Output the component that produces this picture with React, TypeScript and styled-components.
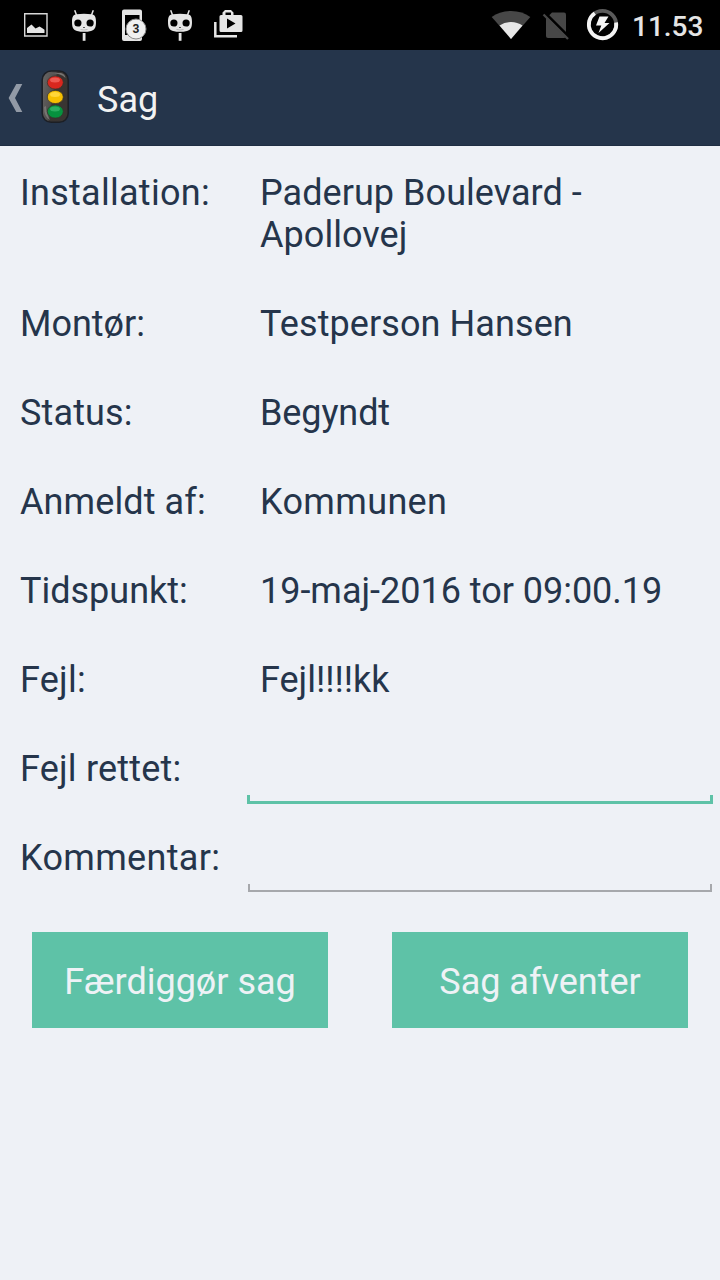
import React from "react";
import styled, { createGlobalStyle } from "styled-components";

const colors = {
  navy: "#25354b",
  page: "#eef1f6",
  green: "#5ec2a7",
  grey: "#a6a8ac",
  icon: "#e5e5e5",
  dim: "#474747",
};

const GlobalStyle = createGlobalStyle`
  body { margin: 0; background: ${colors.page}; }
  * { box-sizing: border-box; }
`;

const Screen = styled.div`
  width: 720px;
  height: 1280px;
  overflow: hidden;
  display: flex;
  flex-direction: column;
  background: ${colors.page};
  color: ${colors.navy};
  font-family: Roboto, "Liberation Sans", sans-serif;
  font-size: 36px;
  line-height: 42px;
`;

const StatusBar = styled.header`
  height: 50px;
  flex: none;
  display: flex;
  justify-content: space-between;
  background: #000;
`;

const StatusGroup = styled.div`
  display: flex;
  align-items: center;
`;

const Clock = styled.span`
  width: 88px;
  height: 50px;
  padding-top: 2px;
  line-height: 50px;
  font-size: 28px;
  font-weight: 500;
  color: ${colors.icon};
  white-space: nowrap;
`;

const StatusIcon = styled.svg`
  display: block;
  height: 50px;
`;

const ActionBar = styled.nav`
  height: 96px;
  flex: none;
  display: flex;
  align-items: center;
  background: ${colors.navy};
  border-bottom: 1px solid #1f2e43;
`;

const Title = styled.h1`
  margin: 5px 0 0;
  padding-left: 1px;
  font: inherit;
  color: #f2f2f2;
`;

const Details = styled.main`
  display: flex;
  flex-direction: column;
`;

const Row = styled.div`
  display: grid;
  grid-template-columns: 240px 480px;
`;

const Label = styled.div<{ $tracking?: number }>`
  padding: 26px 0 21px 20px;
  letter-spacing: ${(p) => p.$tracking ?? 0}px;
  white-space: nowrap;
`;

const Value = styled.div<{ $tracking?: number }>`
  padding: 26px 20px 21px;
  letter-spacing: ${(p) => p.$tracking ?? 0}px;
`;

const Field = styled.label<{ $active?: boolean }>`
  display: flex;
  flex-direction: column;
  justify-content: flex-end;
  padding: ${(p) => (p.$active ? "0 7px 7px" : "0 8px 8px")};
`;

const FieldInput = styled.input`
  height: 50px;
  width: 100%;
  padding: 0 12px;
  border: 0;
  outline: 0;
  background: transparent;
  color: inherit;
  font: inherit;
`;

const Underline = styled.span<{ $active?: boolean }>`
  display: block;
  height: ${(p) => (p.$active ? 9 : 8)}px;
  border: ${(p) => (p.$active ? `3px solid ${colors.green}` : `2px solid ${colors.grey}`)};
  border-top: 0;
`;

const Actions = styled.div`
  display: grid;
  grid-template-columns: 296px 296px;
  gap: 64px;
  padding: 32px;
`;

const ActionButton = styled.button`
  height: 96px;
  padding: 4px 0 0;
  border: 0;
  background: ${colors.green};
  color: #eef2f6;
  font: inherit;
`;

const CidMark = ({ x }: { x: number }) => (
  <g transform={`translate(${x} 0)`}>
    <path d="M2.200 10.300 4.200 15.500M20.800 10.300 18.800 15.500" stroke={colors.icon} strokeWidth="1.500" />
    <path
      fillRule="evenodd"
      fill={colors.icon}
      d="M4 14.300Q11.500 13.200 19 14.300C22.500 14.800 23.500 17 23.500 22C23.500 28 22 30 18.500 30.900Q11.500 32.600 4.500 30.900C1 30-.500 28-.500 22C-.500 17 .500 14.800 4 14.300ZM5.400 19.400a3.600 3.600 0 1 0 0 7.200a3.600 3.600 0 1 0 0-7.200ZM17.600 19.400a3.600 3.600 0 1 0 0 7.200a3.600 3.600 0 1 0 0-7.200Z"
    />
    <path d="M10.700 27.500h1.600" stroke="#333" strokeWidth="1" />
    <path d="M8 29.500q3.500 1 7 0" stroke="#999" strokeWidth=".6" fill="none" />
    <path d="M10.200 33h2.800v7.800h-2.800z" fill={colors.icon} />
  </g>
);

const NotificationIcons = () => (
  <StatusIcon width="250" viewBox="0 0 250 50" aria-hidden="true">
    <path d="M24.700 13.700h22.300v22.300h-22.300z" fill="none" stroke="#d8d8d8" strokeWidth="1.400" />
    <path d="M27 33v-5l4.500-3.500 4 4 4-2 2.500 1.500 2.500 1.700V33z" fill={colors.icon} />
    <CidMark x={72.500} />
    <path
      fillRule="evenodd"
      fill={colors.icon}
      d="M124 9.500h16q2 0 2 2v27.500q0 2-2 2h-16q-2 0-2-2V11.500q0-2 2-2ZM125 15v20h14.500V15Z"
    />
    <circle cx="136" cy="29" r="10" fill="#f0f0f0" stroke="#8b8b8b" strokeWidth="1" />
    <text x="136" y="33.300" textAnchor="middle" fontFamily="Roboto, sans-serif" fontSize="12" fontWeight="700" fill="#222">
      3
    </text>
    <CidMark x={168.500} />
    <path
      fillRule="evenodd"
      fill={colors.icon}
      d="M225 10h6l2.500 2.500V15H241q1.500 0 1.500 1.500V30.500q0 1.500-1.500 1.500H221q-1.500 0-1.500-1.500V16.500q0-1.500 1.500-1.500h1.500V12.500ZM225.500 12.500V15h5.500v-2.500ZM227 18.500V28.500L235.500 23.500Z"
    />
    <path d="M215.300 22V36.300H237" fill="none" stroke={colors.icon} strokeWidth="2.500" />
  </StatusIcon>
);

const SystemIcons = () => (
  <StatusIcon width="152" viewBox="480 0 152 50" aria-hidden="true">
    <path d="M511 39 491.700 17Q499.500 11 511 11T530.300 17Z" fill={colors.dim} />
    <path d="M511 39 499.500 25.500Q504.500 22 511 22T522.500 25.500Z" fill="#e8e8e8" />
    <path d="M552 12.500h12q2 0 2 2V36q0 2-2 2H548q-2 0-2-2V18.500Z" fill={colors.dim} />
    <path d="M545 13 570 38" stroke="#000" strokeWidth="3" />
    <path d="M543.500 14.500 568 39" stroke="#474747" strokeWidth="2.300" />
    <circle cx="602.500" cy="24.500" r="13.700" fill="none" stroke="#5a5a5a" strokeWidth="3.800" />
    <path d="M594.800 13.200A13.700 13.700 0 1 0 616.100 22.500" fill="none" stroke="#f4f4f4" strokeWidth="3.800" />
    <path d="M599.500 16.500h9l-4 6.500h5L598.500 33l2.800-7.500h-5.300Z" fill="#f4f4f4" />
  </StatusIcon>
);

const BackAndLogo = () => (
  <svg width="96" height="96" viewBox="0 0 96 96" aria-hidden="true">
    <defs>
      <linearGradient id="housing" x1="0" y1="0" x2="1" y2=".35">
        <stop offset="0" stopColor="#696766" />
        <stop offset=".48" stopColor="#514f4e" />
        <stop offset=".55" stopColor="#393431" />
        <stop offset="1" stopColor="#393532" />
      </linearGradient>
    </defs>
    <path d="M16.300 34H22.300L15 48 22.300 62H16.300L8.600 48Z" fill="#929aa6" />
    <rect x="42.200" y="21" width="26" height="51.300" rx="9" fill="url(#housing)" stroke="#1c1f25" strokeWidth="1.500" />
    <path d="M49 23H61Q65 24 65.500 28Q61 23 49 23Z" fill="#777472" />
    <path d="M44 57Q44 67 50 70Q46 63 46 56Z" fill="#777472" />
    {[
      [32.500, "#d9271e", "#ef5951"],
      [47, "#f6bf00", "#ffd638"],
      [61.500, "#06923e", "#2baf61"],
    ].map(([y, base, light]) => (
      <g key={base}>
        <ellipse cx="55.300" cy={y} rx="8" ry="6.600" fill={base as string} stroke="#35302a" strokeWidth=".7" />
        <ellipse cx="55" cy={Number(y) - 2.500} rx="5" ry="2.500" fill={light as string} />
      </g>
    ))}
  </svg>
);

interface Detail {
  label: string;
  value: string;
  labelTracking?: number;
  valueTracking?: number;
}

const details: Detail[] = [
  { label: "Installation:", value: "Paderup Boulevard - Apollovej", labelTracking: 0.27, valueTracking: 0.05 },
  { label: "Montør:", value: "Testperson Hansen", valueTracking: 0.09 },
  { label: "Status:", value: "Begyndt", labelTracking: 0.15, valueTracking: -0.1 },
  { label: "Anmeldt af:", value: "Kommunen", labelTracking: 0.1, valueTracking: 0.35 },
  { label: "Tidspunkt:", value: "19-maj-2016 tor 09:00.19", valueTracking: -0.02 },
  { label: "Fejl:", value: "Fejl!!!!kk", labelTracking: 0.25 },
];

interface InputRowProps {
  label: string;
  tracking: number;
  active?: boolean;
}

const InputRow = ({ label, tracking, active }: InputRowProps) => (
  <Row>
    <Label $tracking={tracking}>{label}</Label>
    <Field $active={active}>
      <FieldInput aria-label={label} />
      <Underline $active={active} />
    </Field>
  </Row>
);

export default function App() {
  return (
    <>
      <GlobalStyle />
      <Screen>
        <StatusBar>
          <NotificationIcons />
          <StatusGroup>
            <SystemIcons />
            <Clock>11.53</Clock>
          </StatusGroup>
        </StatusBar>
        <ActionBar>
          <BackAndLogo />
          <Title>Sag</Title>
        </ActionBar>
        <Details>
          {details.map((d) => (
            <Row key={d.label}>
              <Label $tracking={d.labelTracking}>{d.label}</Label>
              <Value $tracking={d.valueTracking}>{d.value}</Value>
            </Row>
          ))}
          <InputRow label="Fejl rettet:" tracking={0.2} active />
          <InputRow label="Kommentar:" tracking={0.33} />
        </Details>
        <Actions>
          <ActionButton>Færdiggør sag</ActionButton>
          <ActionButton>Sag afventer</ActionButton>
        </Actions>
      </Screen>
    </>
  );
}
